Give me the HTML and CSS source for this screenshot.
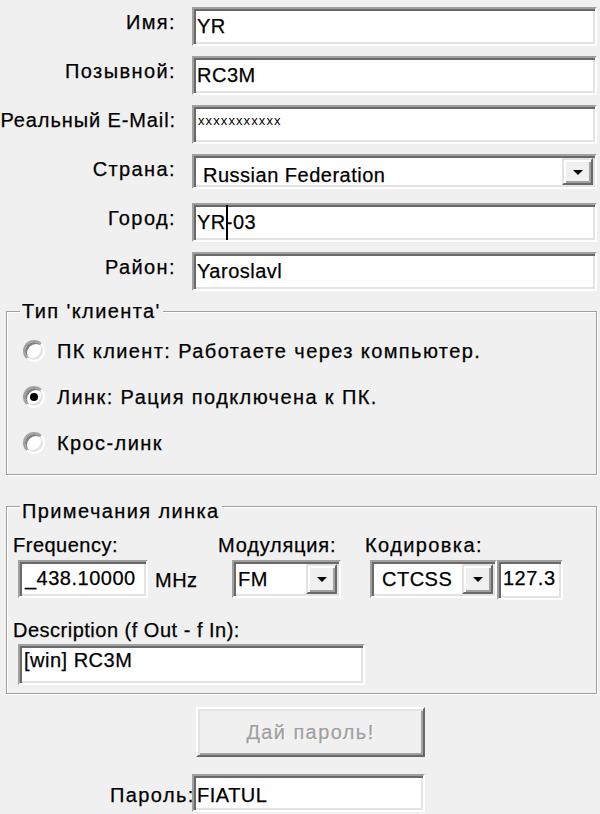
FILE: index.html
```html
<!DOCTYPE html>
<html lang="ru">
<head>
<meta charset="utf-8">
<title>Регистрация</title>
<link rel="stylesheet" href="styles.css">
</head>
<body>
<div class="dialog">
  <div class="fields">
    <div class="lbl cyr">Имя:</div>
    <div class="edit">YR</div>
    <div class="lbl cyr">Позывной:</div>
    <div class="edit">RC3M</div>
    <div class="lbl mixed">Реальный E-Mail:</div>
    <div class="edit edit-mask">xxxxxxxxxxx</div>
    <div class="lbl cyr">Страна:</div>
    <div class="combo combo-country">
      <span class="combo-text">Russian Federation</span>
      <span class="drop-btn"><span class="arrow"></span></span>
    </div>
    <div class="lbl cyr">Город:</div>
    <div class="edit">YR<span class="caret"></span>-03</div>
    <div class="lbl cyr">Район:</div>
    <div class="edit">Yaroslavl</div>
  </div>

  <div class="group group-client">
    <div class="group-title cyr">Тип 'клиента'</div>
    <div class="radio-list cyr">
      <div class="radio-row"><span class="radio"></span><span>ПК клиент: Работаете через компьютер.</span></div>
      <div class="radio-row"><span class="radio checked"></span><span>Линк: Рация подключена к ПК.</span></div>
      <div class="radio-row"><span class="radio"></span><span>Крос-линк</span></div>
    </div>
  </div>

  <div class="group group-link">
    <div class="group-title cyr">Примечания линка</div>
    <div class="link-row">
      <div class="col col-freq">
        <div class="col-label">Frequency:</div>
        <div class="ctrls">
          <div class="edit edit-freq">_438.10000</div>
          <span class="unit">MHz</span>
        </div>
      </div>
      <div class="col col-mod">
        <div class="col-label cyr-narrow">Модуляция:</div>
        <div class="ctrls">
          <div class="combo combo-mod">
            <span class="combo-text">FM</span>
            <span class="drop-btn"><span class="arrow"></span></span>
          </div>
        </div>
      </div>
      <div class="col col-code">
        <div class="col-label cyr">Кодировка:</div>
        <div class="ctrls">
          <div class="combo combo-code">
            <span class="combo-text">CTCSS</span>
            <span class="drop-btn"><span class="arrow"></span></span>
          </div>
          <div class="edit edit-tone">127.3</div>
        </div>
      </div>
    </div>
    <div class="col-label desc-label">Description (f Out - f In):</div>
    <div class="edit edit-desc">[win] RC3M</div>
  </div>

  <div class="btn disabled cyr">Дай пароль!</div>

  <div class="pass-row">
    <span class="lbl pass-label cyr">Пароль:</span>
    <div class="edit edit-pass">FIATUL</div>
  </div>
</div>
</body>
</html>
```
FILE: styles.css
```css
html, body {
  margin: 0;
  padding: 0;
  background: #f0f0f0;
}

.dialog {
  width: 600px;
  height: 814px;
  overflow: hidden;
  font-family: "Liberation Sans", Arial, sans-serif;
  font-size: 20px;
  letter-spacing: 0.5px;
  line-height: 24px;
  color: #000;
  -webkit-text-stroke: 0.25px currentColor;
}

/* Cyrillic captions run wider than the Latin ones */
.cyr {
  letter-spacing: 1.4px;
}

.cyr-narrow {
  letter-spacing: 0.8px;
}

.mixed {
  letter-spacing: 0.9px;
}

/* ---- top form: labels on the left, edits on the right ---- */
.fields {
  display: grid;
  grid-template-columns: 176px 405px;
  column-gap: 16px;
  grid-auto-rows: 49px;
  align-items: start;
  padding-top: 7px;
}

.lbl {
  text-align: right;
  padding-top: 3px;
  white-space: nowrap;
}

/* sunken classic edit box */
.edit {
  box-sizing: border-box;
  height: 39px;
  background: #fff;
  border: 2px solid;
  border-color: #a0a0a0 #fff #fff #a0a0a0;
  box-shadow: inset 2px 2px 0 #696969, inset -2px -2px 0 #e3e3e3;
  padding: 5px 3px 0 3px;
  white-space: nowrap;
  overflow: hidden;
  letter-spacing: 0.5px;
}

.edit-mask {
  font-size: 13px;
  letter-spacing: 1.1px;
  line-height: 12px;
  padding-top: 8px;
  padding-left: 4px;
  -webkit-text-stroke: 0;
}

.caret {
  display: inline-block;
  width: 2px;
  height: 36px;
  margin: -6px -2px 0 0;
  vertical-align: top;
  background: #000;
}

/* combo box: sunken frame holding text and a raised drop button */
.combo {
  box-sizing: border-box;
  display: flex;
  background: #fff;
  border: 2px solid;
  border-color: #a0a0a0 #fff #fff #a0a0a0;
  box-shadow: inset 2px 2px 0 #696969, inset -2px -2px 0 #e3e3e3;
  padding: 2px;
  white-space: nowrap;
  overflow: hidden;
}

.combo-text {
  flex: 1;
  overflow: hidden;
  padding-top: 3px;
}

.combo-country {
  height: 35px;
}

.combo-country .combo-text {
  padding: 5px 0 0 7px;
}

.drop-btn {
  box-sizing: border-box;
  flex: none;
  width: 31px;
  display: flex;
  align-items: center;
  justify-content: center;
  background: #f0f0f0;
  border: 2px solid;
  border-color: #e3e3e3 #696969 #696969 #e3e3e3;
  box-shadow: inset 2px 2px 0 #fff, inset -2px -2px 0 #a0a0a0;
}

.arrow {
  width: 0;
  height: 0;
  border-left: 5px solid transparent;
  border-right: 5px solid transparent;
  border-top: 5px solid #000;
  margin-top: 1px;
}

/* ---- group boxes with etched frame ---- */
.group {
  margin: 0 3px 0 6px;
  border: 1px solid #a0a0a0;
  box-shadow: inset 1px 1px 0 #fff, 1px 1px 0 #fff;
}

.group-title {
  display: block;
  width: max-content;
  padding: 0 2px;
  margin-left: 13px;
  background: #f0f0f0;
  white-space: nowrap;
}

.group-client {
  margin-top: 10px;
  padding-bottom: 8px;
}

.group-client .group-title {
  margin-top: -13px;
}

.radio-list {
  margin-top: 5px;
  padding-left: 16px;
}

.radio-row {
  height: 46px;
  display: flex;
  align-items: center;
  gap: 12px;
  white-space: nowrap;
}

.radio {
  box-sizing: border-box;
  flex: none;
  width: 22px;
  height: 22px;
  border-radius: 50%;
  background: #fff;
  border: 2px solid;
  border-color: #a0a0a0 #fff #fff #a0a0a0;
  box-shadow: inset 2px 2px 0 #808080, inset -2px -2px 0 #e3e3e3;
  display: flex;
  align-items: center;
  justify-content: center;
}

.radio.checked::after {
  content: "";
  width: 8px;
  height: 8px;
  border-radius: 50%;
  background: #000;
}

.group-link {
  margin-top: 31px;
  padding: 0 0 8px 6px;
}

.group-link .group-title {
  margin: -8px 0 0 7px;
}

.link-row {
  display: flex;
  margin-top: 10px;
}

.col-label {
  white-space: nowrap;
}

.ctrls {
  display: flex;
  align-items: flex-start;
  margin-top: 3px;
}

.col-freq {
  width: 205px;
}

.col-freq .ctrls {
  margin-left: 5px;
}

.edit-freq {
  width: 130px;
  height: 38px;
  padding: 4px 0 0 5px;
}

.unit {
  margin-left: 7px;
  padding-top: 8px;
}

.col-mod {
  width: 147px;
}

.col-mod .ctrls {
  margin-left: 14px;
}

.combo-mod {
  width: 109px;
  height: 38px;
}

.combo-mod .combo-text {
  padding-left: 2px;
}

.col-code .ctrls {
  margin-left: 5px;
}

.combo-code {
  width: 127px;
  height: 38px;
}

.combo-code .combo-text {
  padding-left: 8px;
}

.edit-tone {
  width: 66px;
  height: 40px;
  padding: 4px 0 0 4px;
}

.desc-label {
  margin-top: 18px;
}

.edit-desc {
  width: 347px;
  height: 41px;
  margin: 2px 0 0 5px;
  padding: 2px 0 0 4px;
}

/* ---- raised push button ---- */
.btn {
  box-sizing: border-box;
  width: 229px;
  height: 50px;
  margin: 13px 0 0 196px;
  display: flex;
  align-items: center;
  justify-content: center;
  background: #f0f0f0;
  border: 2px solid;
  border-color: #fff #696969 #696969 #fff;
  box-shadow: inset 2px 2px 0 #e3e3e3, inset -2px -2px 0 #a0a0a0;
  white-space: nowrap;
}

.btn.disabled {
  color: #a0a0a0;
  text-shadow: 1px 1px 0 #fff;
}

.pass-row {
  display: flex;
  align-items: flex-start;
  gap: 2px;
  margin: 17px 0 0 110px;
}

.pass-label {
  width: 80px;
  padding-top: 9px;
}

.edit-pass {
  width: 233px;
  height: 38px;
  padding-top: 7px;
}
```
